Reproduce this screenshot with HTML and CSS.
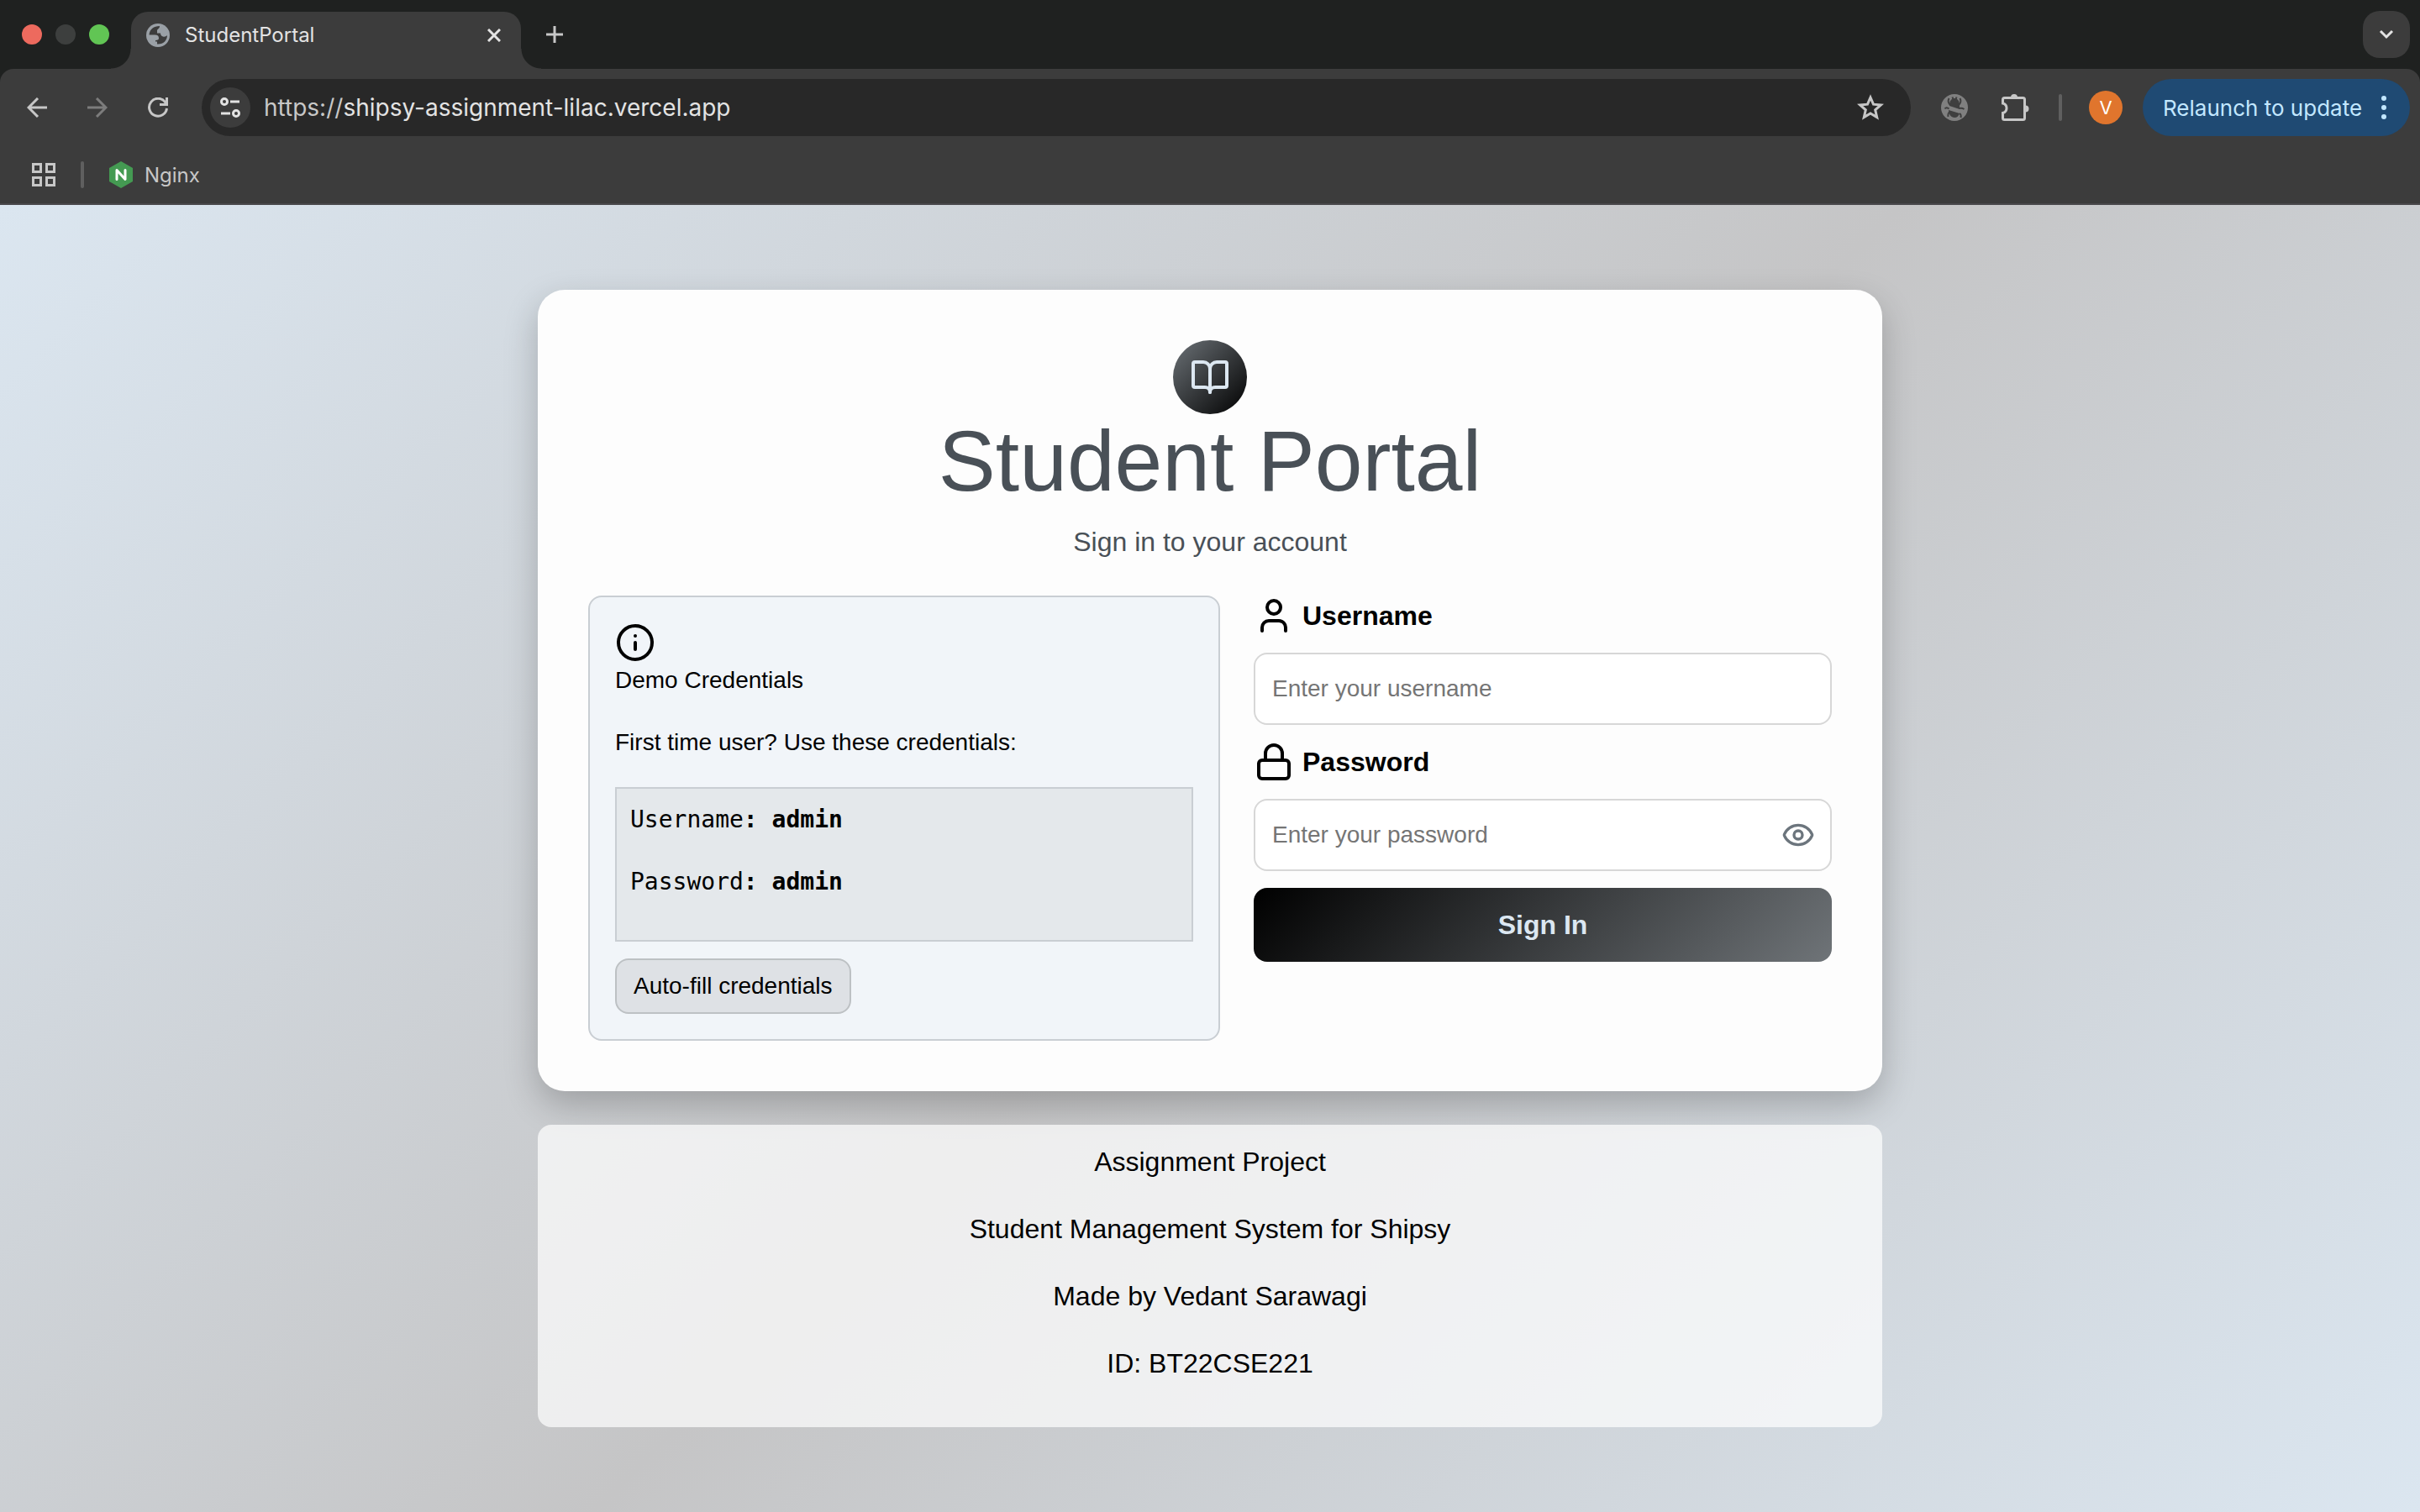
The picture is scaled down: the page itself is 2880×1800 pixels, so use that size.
FILE: index.html
```html
<!DOCTYPE html>
<html lang="en">
<head>
<meta charset="utf-8">
<title>StudentPortal</title>
<link rel="stylesheet" href="styles.css">
</head>
<body>
<header class="browser">
  <div class="tab-strip">
    <div class="lights">
      <span class="light light-close"></span>
      <span class="light light-min"></span>
      <span class="light light-max"></span>
    </div>
    <div class="tab">
      <svg class="favicon" viewBox="0 0 28 28" width="28" height="28" aria-hidden="true">
        <circle cx="14" cy="14" r="14" fill="#9aa0a6"/>
        <path fill="#3c3c3c" d="M16 3C9 3 4 7 3.500 13.500h7c3 0 4.500 1.500 4.500 4 0 1.500-1 2.500-4 2.500v1.500h2V24.500c7.500.5 12-4.500 12-10.500-1.500 1.500-3 2-5 1.500-2-.5-3-2-3-4h-4v-3c0-2 3-2 3-5.500z"/>
      </svg>
      <span class="tab-title">StudentPortal</span>
      <button class="icon-button tab-close" aria-label="Close tab">
        <svg viewBox="0 0 16 16" width="16" height="16"><path d="M1 1l14 14M15 1L1 15" stroke="#e3e3e3" stroke-width="3"/></svg>
      </button>
    </div>
    <button class="icon-button new-tab" aria-label="New tab">
      <svg viewBox="0 0 20 20" width="20" height="20"><path d="M10 0v20M0 10h20" stroke="#c7c7c7" stroke-width="3"/></svg>
    </button>
    <button class="tab-search" aria-label="Search tabs">
      <svg viewBox="0 0 18 12" width="18" height="12"><path d="M2 2l7 7 7-7" fill="none" stroke="#e3e3e3" stroke-width="3"/></svg>
    </button>
  </div>

  <div class="chrome-body">
    <div class="toolbar">
      <button class="icon-button nav-button" aria-label="Back">
        <svg viewBox="0 0 24 24" width="24" height="24"><path d="M24 12H2M13 1L2 12l11 11" fill="none" stroke="#c7c7c7" stroke-width="3"/></svg>
      </button>
      <button class="icon-button nav-button" aria-label="Forward">
        <svg viewBox="0 0 24 24" width="24" height="24"><path d="M0 12h22M11 1l11 11-11 11" fill="none" stroke="#7c7c7c" stroke-width="3"/></svg>
      </button>
      <button class="icon-button nav-button" aria-label="Reload">
        <svg viewBox="0 0 24 24" width="24" height="24"><path d="M22.500 13A10.500 10.500 0 1 1 20.500 5.500L22 8M22.500 0v8.500H14" fill="none" stroke="#c7c7c7" stroke-width="3"/></svg>
      </button>
      <div class="address">
        <button class="site-info" aria-label="View site information">
          <svg viewBox="0 0 26 24" width="26" height="24" fill="none" stroke="#e3e3e3" stroke-width="3">
            <circle cx="6" cy="5" r="3.500"/><path d="M13 5h11M2 19h11"/><circle cx="20" cy="19" r="3.500"/>
          </svg>
        </button>
        <label class="scheme" for="url">https://</label>
        <input class="url" id="url" type="text" value="shipsy-assignment-lilac.vercel.app">
        <button class="icon-button star" aria-label="Bookmark this tab">
          <svg viewBox="0 0 32 32" width="32" height="32"><path d="M16 4l3.500 8.200 8.900.8-6.700 5.900 2 8.700L16 23l-7.700 4.600 2-8.700L3.600 13l8.900-.8z" fill="none" stroke="#c7c7c7" stroke-width="3"/></svg>
        </button>
      </div>
      <div class="extensions">
        <button class="icon-button ext-button" aria-label="Debugger extension">
          <svg viewBox="0 0 32 32" width="32" height="32">
            <circle cx="16" cy="16" r="16" fill="#808080"/>
            <path d="M10 13c0-5 2.500-8 6-8s6 3 6 8v5l-12-4z" fill="#3f3f3f"/>
            <path d="M9 19l13 4c-1 3-3 5-6 5-4 0-7-4-7-9z" fill="#3f3f3f"/>
            <path d="M13.500 3.500l1 3M18.500 3.500l-1 3M9.500 5c-1.500 3-.5 6 1 7.500M22.500 5c1.500 3 .5 6-1 7.500M8.500 27c-.5-3 .5-5 2-6M23.500 28c.5-2 0-4-1.500-5M4.500 17.500c1.500-2 3-1.500 5 0M27.500 18c-2-1.500-4-1.500-6-1" fill="none" stroke="#3f3f3f" stroke-width="2"/>
          </svg>
        </button>
        <button class="icon-button ext-button" aria-label="Extensions">
          <svg viewBox="0 0 34 34" width="34" height="34">
            <path d="M4.500 5.500h22q2 0 2 2v22q0 2-2 2h-22q-2 0-2-2v-6c6-1.500 6-10 0-11.500v-4.500q0-2 2-2z" fill="none" stroke="#c7c7c7" stroke-width="3"/>
            <path d="M12 5a4 4 0 0 1 8 0zM29.500 14.500a4 4 0 0 1 0 8z" fill="#c7c7c7"/>
          </svg>
        </button>
        <span class="divider"></span>
        <button class="avatar" aria-label="Profile">V</button>
        <button class="relaunch">Relaunch to update
          <svg viewBox="0 0 6 28" width="6" height="28" fill="#c2e7ff"><circle cx="3" cy="3" r="3"/><circle cx="3" cy="14" r="3"/><circle cx="3" cy="25" r="3"/></svg>
        </button>
      </div>
    </div>
    <nav class="bookmarks" aria-label="Bookmarks">
      <button class="icon-button" aria-label="Apps">
        <svg viewBox="0 0 28 28" width="28" height="28" fill="none" stroke="#c7c7c7" stroke-width="3"><path d="M1.500 1.500h9v9h-9zM17.500 1.500h9v9h-9zM1.500 17.500h9v9h-9zM17.500 17.500h9v9h-9z"/></svg>
      </button>
      <span class="divider"></span>
      <a class="bookmark" href="#nginx">
        <svg viewBox="0 0 28 32" width="28" height="32" aria-hidden="true"><path d="M14 0l14 8v16l-14 8L0 24V8z" fill="#449a52"/><path d="M9 21.500V10.500l10 11v-11" fill="none" stroke="#fff" stroke-width="3" stroke-linecap="round" stroke-linejoin="round"/></svg>
        Nginx
      </a>
    </nav>
  </div>
</header>

<main class="page">
  <section class="card">
    <div class="card-head">
      <div class="logo">
        <svg class="line-icon" viewBox="0 0 24 24" width="48" height="48"><path d="M12 7v14"/><path d="M3 18a1 1 0 0 1-1-1V4a1 1 0 0 1 1-1h5a4 4 0 0 1 4 4 4 4 0 0 1 4-4h5a1 1 0 0 1 1 1v13a1 1 0 0 1-1 1h-6a3 3 0 0 0-3 3 3 3 0 0 0-3-3z"/></svg>
      </div>
      <h1 class="title">Student Portal</h1>
      <p class="subtitle">Sign in to your account</p>
    </div>
    <div class="columns">
      <div class="demo">
        <svg class="line-icon" viewBox="0 0 24 24" width="48" height="48"><circle cx="12" cy="12" r="10"/><path d="M12 16v-4M12 8h.01"/></svg>
        <p class="demo-text">Demo Credentials</p>
        <p class="demo-text">First time user? Use these credentials:</p>
        <div class="credentials">
          <p class="demo-text">Username<strong>: admin</strong></p>
          <p class="demo-text">Password<strong>: admin</strong></p>
        </div>
        <button class="autofill" type="button">Auto-fill credentials</button>
      </div>
      <form class="login">
        <label class="field-label" for="username">
          <svg class="line-icon" viewBox="0 0 24 24" width="48" height="48"><path d="M19 21v-2a4 4 0 0 0-4-4H9a4 4 0 0 0-4 4v2"/><circle cx="12" cy="7" r="4"/></svg>
          Username
        </label>
        <input class="field" id="username" type="text" placeholder="Enter your username">
        <label class="field-label" for="password">
          <svg class="line-icon" viewBox="0 0 24 24" width="48" height="48"><rect x="3" y="11" width="18" height="11" rx="2"/><path d="M7 11V7a5 5 0 0 1 10 0v4"/></svg>
          Password
        </label>
        <div class="password-wrap">
          <input class="field" id="password" type="password" placeholder="Enter your password">
          <button class="icon-button reveal" type="button" aria-label="Show password">
            <svg class="line-icon" viewBox="0 0 24 24" width="40" height="40"><path d="M2.062 12.348a1 1 0 0 1 0-.696 10.750 10.750 0 0 1 19.876 0 1 1 0 0 1 0 .696 10.750 10.750 0 0 1-19.876 0"/><circle cx="12" cy="12" r="3"/></svg>
          </button>
        </div>
        <button class="submit" type="button">Sign In</button>
      </form>
    </div>
  </section>
  <footer class="credits">
    <p>Assignment Project</p>
    <p>Student Management System for Shipsy</p>
    <p>Made by Vedant Sarawagi</p>
    <p>ID: BT22CSE221</p>
  </footer>
</main>
</body>
</html>
```
FILE: styles.css
```css
* {
  box-sizing: border-box;
}

body {
  margin: 0;
  min-height: 100vh;
  display: flex;
  flex-direction: column;
  font-family: "Liberation Sans", Arial, sans-serif;
  color: #000;
}

p,
h1 {
  margin: 0;
}

button,
input {
  font-family: inherit;
}

svg {
  display: block;
  flex: none;
}

.icon-button {
  display: flex;
  align-items: center;
  justify-content: center;
  padding: 0;
  border: 0;
  background: none;
}

/* Browser window */
.browser {
  background: #1f2120;
  font-family: Inter, sans-serif;
}

.tab-strip {
  display: flex;
  align-items: center;
  height: 82px;
  padding: 0 12px 0 26px;
}

.lights {
  display: flex;
  gap: 16px;
}

.light {
  width: 24px;
  height: 24px;
  border-radius: 50%;
}

.light-close { background: #ed6a5e; }
.light-min { background: #3d3f3e; }
.light-max { background: #61c554; }

.tab {
  position: relative;
  display: flex;
  align-items: center;
  align-self: flex-end;
  width: 464px;
  height: 68px;
  margin-left: 26px;
  padding: 0 24px 12px 18px;
  border-radius: 20px 20px 0 0;
  background: #3c3c3c;
}

.tab::before,
.tab::after {
  content: "";
  position: absolute;
  bottom: 0;
  width: 24px;
  height: 24px;
}

.tab::before {
  right: 100%;
  background: radial-gradient(circle at 0 0, transparent 23px, #3c3c3c 24px);
}

.tab::after {
  left: 100%;
  background: radial-gradient(circle at 100% 0, transparent 23px, #3c3c3c 24px);
}

.tab-title {
  flex: 1;
  margin-left: 18px;
  font-size: 24px;
  line-height: 32px;
  color: #e3e3e3;
}

.new-tab {
  margin-left: 30px;
}

.tab-search {
  display: flex;
  align-items: center;
  justify-content: center;
  width: 56px;
  height: 56px;
  margin-left: auto;
  padding: 0;
  border: 0;
  border-radius: 20px;
  background: #3c3c3c;
}

.chrome-body {
  border-bottom: 2px solid #49484b;
  border-radius: 16px 16px 0 0;
  background: #3c3c3c;
}

.toolbar {
  display: flex;
  align-items: center;
  padding: 12px 12px 12px 8px;
}

.nav-button {
  width: 72px;
  height: 68px;
}

.address {
  display: flex;
  flex: 1;
  align-items: center;
  height: 68px;
  margin-left: 16px;
  padding: 0 32px 0 10px;
  border-radius: 34px;
  background: #282828;
  font-size: 28px;
}

.site-info {
  display: flex;
  align-items: center;
  justify-content: center;
  width: 48px;
  height: 48px;
  margin-right: 16px;
  padding: 0;
  border: 0;
  border-radius: 50%;
  background: #3c3c3c;
}

.scheme {
  color: #c7c7c7;
}

.url {
  flex: 1;
  padding: 0;
  border: 0;
  outline: 0;
  background: none;
  font-size: 28px;
  color: #e3e3e3;
}

.extensions {
  display: flex;
  align-items: center;
  margin-left: 16px;
}

.ext-button {
  width: 72px;
  height: 68px;
}

.divider {
  width: 4px;
  height: 32px;
  border-radius: 2px;
  background: #5f5f5f;
}

.extensions .divider {
  margin: 0 32px 0 16px;
}

.avatar {
  width: 40px;
  height: 40px;
  padding: 0;
  border: 0;
  border-radius: 50%;
  background: #e0752d;
  font-size: 22px;
  color: #fff;
}

.relaunch {
  display: flex;
  align-items: center;
  justify-content: space-between;
  width: 318px;
  height: 68px;
  margin-left: 24px;
  padding: 0 28px 0 24px;
  border: 0;
  border-radius: 34px;
  background: #1f4a73;
  font-size: 26px;
  color: #c2e7ff;
  white-space: nowrap;
}

.bookmarks {
  display: flex;
  align-items: center;
  height: 68px;
  padding-left: 38px;
}

.bookmarks .divider {
  margin: 0 30px;
}

.bookmark {
  display: flex;
  align-items: center;
  gap: 14px;
  font-size: 24px;
  color: #c7c7c7;
  text-decoration: none;
}

/* Login page */
.page {
  flex: 1;
  display: flex;
  flex-direction: column;
  align-items: center;
  justify-content: center;
  gap: 40px;
  padding: 40px;
  background: linear-gradient(135deg, #dbe6f0, #c5c5c6 51%, #dbe6f0);
}

.card,
.credits {
  width: 100%;
  max-width: 1600px;
}

.card {
  padding: 60px;
  border-radius: 32px;
  background: #fdfdfd;
  box-shadow: 0 16px 40px rgba(0, 0, 0, 0.22);
}

.line-icon {
  fill: none;
  stroke: currentColor;
  stroke-width: 2;
  stroke-linecap: round;
  stroke-linejoin: round;
}

.card-head {
  display: flex;
  flex-direction: column;
  align-items: center;
  color: #495057;
}

.logo {
  display: flex;
  align-items: center;
  justify-content: center;
  width: 88px;
  height: 88px;
  border-radius: 50%;
  background: linear-gradient(135deg, #6c7277, #000);
  color: #dce7f1;
}

.title {
  font-size: 102px;
  font-weight: 400;
  line-height: 112px;
}

.subtitle {
  margin-top: 16px;
  font-size: 32px;
  line-height: 48px;
}

.columns {
  display: grid;
  grid-template-columns: 47fr 43fr;
  gap: 40px;
  margin-top: 40px;
}

.demo {
  padding: 30px;
  border: 2px solid #c9ced3;
  border-radius: 16px;
  background: #f1f5f9;
}

.demo-text {
  margin-bottom: 32px;
  font-size: 28px;
  line-height: 42px;
}

.credentials {
  padding: 16px 16px 0;
  border: 2px solid #c9ced3;
  background: #e4e8eb;
  font-family: "DejaVu Sans Mono", monospace;
}

.credentials .demo-text:last-child {
  margin-bottom: 48px;
}

.autofill {
  display: block;
  height: 66px;
  margin-top: 20px;
  padding: 0 20px;
  border: 2px solid #bdc1c4;
  border-radius: 16px;
  background: #dee1e5;
  font-size: 28px;
}

.login {
  display: flex;
  flex-direction: column;
  gap: 20px;
}

.field-label {
  display: flex;
  align-items: center;
  gap: 10px;
  font-size: 32px;
  font-weight: 700;
}

.field {
  width: 100%;
  height: 86px;
  padding: 0 20px;
  border: 2px solid #d7d7d7;
  border-radius: 16px;
  background: #fff;
  font-size: 28px;
}

.field::placeholder {
  color: #757575;
}

.password-wrap {
  position: relative;
}

.reveal {
  position: absolute;
  top: 0;
  right: 20px;
  height: 100%;
  color: #6c757d;
}

.submit {
  height: 88px;
  border: 0;
  border-radius: 16px;
  background: linear-gradient(135deg, #000, #6f7478);
  font-size: 32px;
  font-weight: 700;
  color: #dce7f1;
}

.credits {
  display: flex;
  flex-direction: column;
  gap: 32px;
  padding: 20px 20px 52px;
  border-radius: 16px;
  background: rgba(255, 255, 255, 0.7);
  font-size: 32px;
  line-height: 48px;
  text-align: center;
}
```
